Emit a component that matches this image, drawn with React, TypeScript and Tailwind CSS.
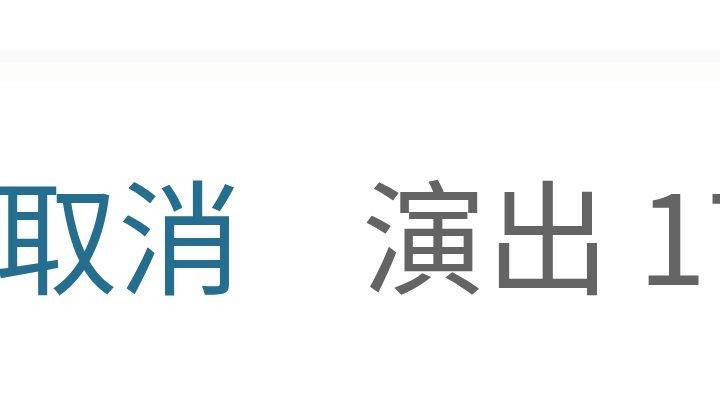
export default function App() {
  return (
    <div className="w-[720px] h-[405px] overflow-hidden bg-white relative">
      {/* faint divider near top */}
      <div className="mt-[50px] h-[12px] bg-[#fafafa]" />
      <div className="h-[20px] bg-[#fdfdfb]" />

      <div
        className="mt-[87px] flex items-center whitespace-nowrap text-[124px] leading-[124px] -ml-[6px]"
        style={{ fontFamily: '"Noto Sans CJK SC", "Noto Sans", sans-serif' }}
      >
        <span className="text-[#246f90]">取消</span>
        <span className="ml-[120px] text-[#646464]">演出 17</span>
      </div>
    </div>
  );
}
